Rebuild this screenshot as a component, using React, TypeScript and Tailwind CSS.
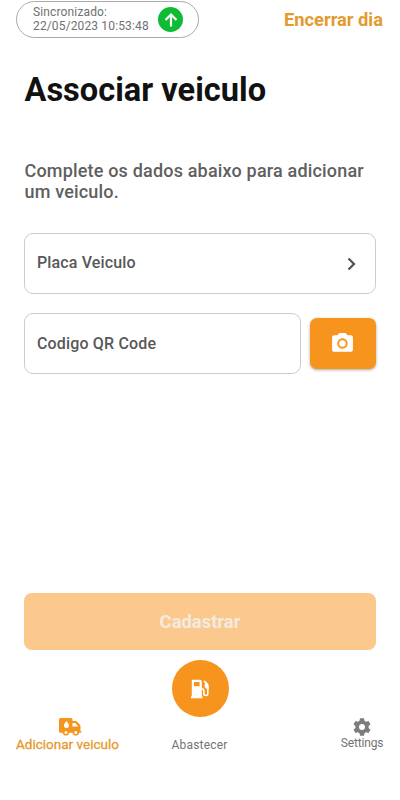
import React from 'react';
import { MdPhotoCamera } from 'react-icons/md';

function TruckIcon() {
  return (
    <svg className="block" width="24" height="20" viewBox="0 0 24 20" fill="none">
      <path fillRule="evenodd" fill="#f3951f" d="M2.500 1H13a1.500 1.500 0 0 1 1.500 1.500V4h3c.6 0 1 .2 1.400.6l3 3.200c.4.4.6.8.6 1.400v5h.3c.5 0 .7.3.7.8s-.2.8-.7.8h-1.600a3.400 3.400 0 0 1-6.700 0H11.300a3.400 3.400 0 0 1-6.700 0H2.500A1.500 1.500 0 0 1 1 14.300V2.500A1.500 1.500 0 0 1 2.500 1ZM14.500 6v3.500h5.800L17.200 6ZM8.500 4S6 6.900 6 8.500a2.500 2.500 0 0 0 5 0C11 6.900 8.500 4 8.500 4ZM8 13.900a1.500 1.500 0 1 0 0 3 1.500 1.500 0 0 0 0-3Zm9.800 0a1.500 1.500 0 1 0 0 3 1.500 1.500 0 0 0 0-3Z" />
    </svg>
  );
}

function PumpIcon() {
  return (
    <svg className="block" width="20" height="20" viewBox="0 0 20 20" fill="none">
      <path fillRule="evenodd" fill="#fff" d="M3 .8h7A1.800 1.800 0 0 1 11.800 2.600V17.200h.7v2H1v-2h.8V2.200C1.800 1.300 2.200.8 3 .8Zm1 2.100v4.300h5.600V2.900Z" />
      <path stroke="#fff" strokeWidth="1.600" d="M11.500 10h1c1 0 1.300.5 1.300 1.500v3.200c0 2.300 4 2.300 4 0V7c0-1.200-.4-2-1.100-2.700L14 1.900" />
      <path fill="#fff" d="m14.800 2.700 3.800 4.100v4l-2.500-1.400c-1.500-.9-1.700-2.300-1.300-3.400Z" />
    </svg>
  );
}

function GearIcon() {
  return (
    <svg className="block" width="18" height="18" viewBox="0 0 18 18">
      <path fillRule="evenodd" fill="#7d7d7d" d="M7 .3h4l.5 2.500 1.500.9 2.500-.8 2 3.400L15.600 8v2l1.900 1.700-2 3.400-2.500-.8-1.500.9-.5 2.500H7l-.5-2.500-1.500-.9-2.500.8-2-3.400L2.400 10V8L.5 6.300l2-3.400 2.500.8 1.500-.9ZM9 6a3 3 0 1 0 0 6 3 3 0 0 0 0-6Z" />
    </svg>
  );
}

export default function App() {
  return (
    <div className="flex h-[800px] w-[400px] flex-col overflow-hidden bg-white font-['Roboto',sans-serif]">
      <header className="flex h-[39px] shrink-0 items-start justify-between pl-4 pr-[17px] pt-px">
        <div className="flex h-[37px] w-[183px] items-center justify-between rounded-full border border-[#aaa] pl-4 pr-[15px]">
          <p className="whitespace-nowrap pb-px text-[12px] leading-[14px] tracking-[0.14px] text-[#707070]">
            Sincronizado:<br />22/05/2023 10:53:48
          </p>
          <span className="flex size-[25px] items-center justify-center rounded-full bg-[#0dbb35]">
            <svg width="16" height="16" viewBox="0 0 16 16" fill="none" stroke="#fff" strokeWidth="2.200">
              <path d="M8 14.500V2.500M2.500 8 8 2.500 13.500 8" />
            </svg>
          </span>
        </div>
        <button className="mt-[7px] whitespace-nowrap text-[18.300px] font-bold leading-6 text-[#e59a2c]">Encerrar dia</button>
      </header>

      <main className="flex flex-col px-6">
        <h1 className="ml-[0.500px] mt-[31px] whitespace-nowrap text-[32.600px] font-bold leading-10 text-[#111]">Associar veiculo</h1>
        <p className="ml-[0.500px] mt-[50px] whitespace-nowrap text-[18px] font-medium leading-[21px] tracking-[0.18px] text-[#606060]">
          Complete os dados abaixo para adicionar<br />um veiculo.
        </p>
        <div className="mt-[31px] flex h-[61px] items-center justify-between rounded-[9px] border border-[#ccc] pl-3 pr-[19px] text-[16px] font-medium tracking-[0.14px] text-[#585858]">
          <span className="pb-[2px]">Placa Veiculo</span>
          <svg width="9" height="14" viewBox="0 0 9 14" fill="none" stroke="#555" strokeWidth="2.300">
            <path d="m1.500 1.500 5.500 5.500-5.500 5.500" />
          </svg>
        </div>
        <div className="mt-[19px] flex items-center gap-[9px]">
          <div className="flex h-[61px] w-[277px] items-center rounded-[9px] border border-[#ccc] pl-3 text-[16px] font-medium tracking-[0.160px] text-[#585858]">Codigo QR Code</div>
          <button className="flex h-[51px] w-[66px] items-center justify-center rounded-[7px] bg-[#f7941e] text-white shadow-[0_1px_3px_rgba(0,0,0,0.35)]">
            <MdPhotoCamera className="mr-px" size={25} />
          </button>
        </div>
        <button className="mt-[219px] h-[57px] rounded-[8px] bg-[#fbc98e] text-[18.400px] font-bold text-[#f4ebe0]">Cadastrar</button>
      </main>

      <nav className="mt-[10px] grid h-[93px] grid-cols-[103px_1fr_103px] items-end pl-4 pr-[17px]">
        <div className="flex flex-col items-center pb-px text-[#e59a2c]">
          <span className="ml-1"><TruckIcon /></span>
          <span className="whitespace-nowrap text-[13.500px] leading-[15px] [-webkit-text-stroke:0.300px]">Adicionar veiculo</span>
        </div>
        <div className="flex h-full flex-col items-center">
          <span className="ml-px flex size-[57px] shrink-0 items-center justify-center rounded-full bg-[#f7941e]"><PumpIcon /></span>
          <span className="mt-[21px] whitespace-nowrap text-[12px] leading-[14px] tracking-[0.170px] text-[#737373]">Abastecer</span>
        </div>
        <div className="flex w-[42px] flex-col items-center justify-self-end pb-[3px] text-[#737373]">
          <GearIcon />
          <span className="whitespace-nowrap text-[12px] leading-[14px] tracking-[-0.160px]">Settings</span>
        </div>
      </nav>
    </div>
  );
}
